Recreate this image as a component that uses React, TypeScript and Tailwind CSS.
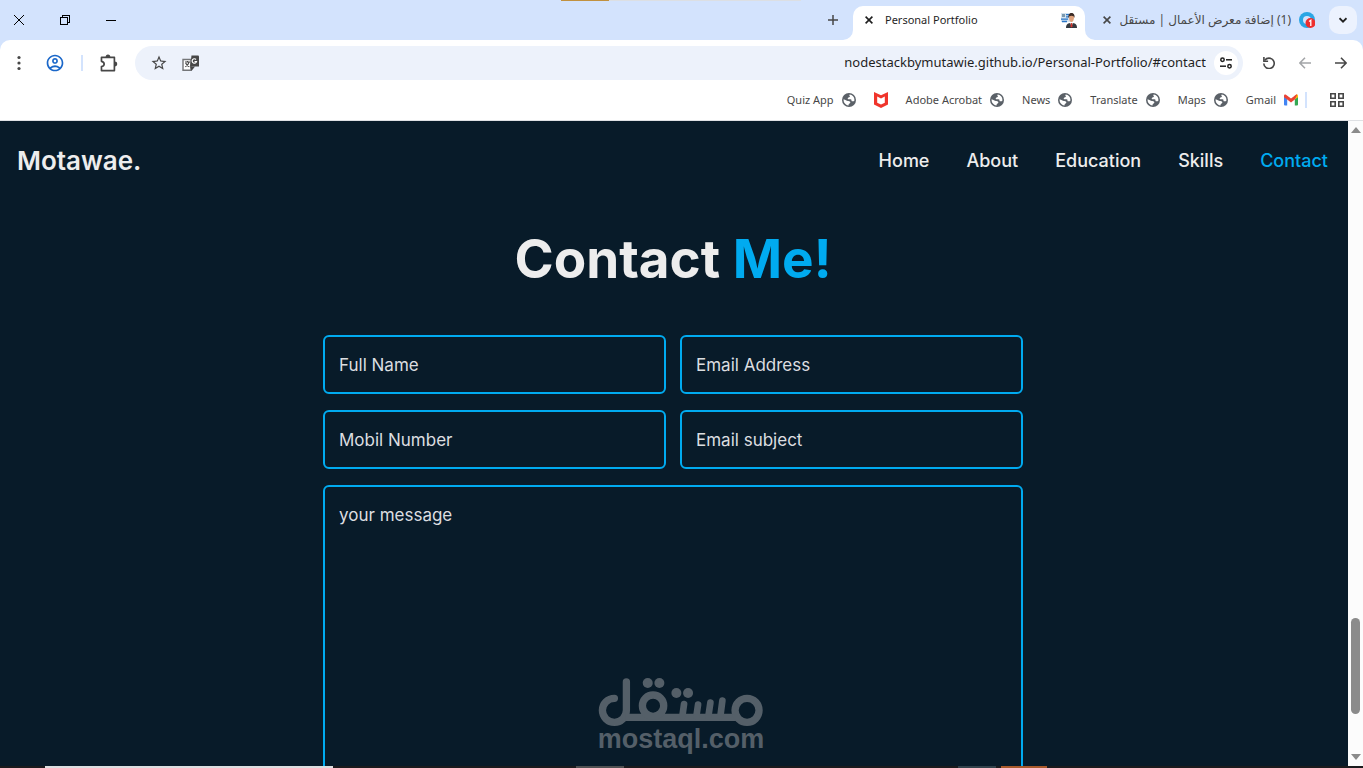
import type { ReactNode } from 'react'
import { MdOutlineAccountCircle, MdStarOutline } from 'react-icons/md'

interface Bookmark {
  label: string
  icon: 'globe' | 'shield' | 'gmail'
}

const BOOKMARKS: Bookmark[] = [
  { label: 'Quiz App',      icon: 'globe'  },
  { label: '',              icon: 'shield' },
  { label: 'Adobe Acrobat', icon: 'globe'  },
  { label: 'News',          icon: 'globe'  },
  { label: 'Translate',     icon: 'globe'  },
  { label: 'Maps',          icon: 'globe'  },
  { label: 'Gmail',         icon: 'gmail'  },
]

const NAV_LINKS = ['Home', 'About', 'Education', 'Skills', 'Contact']

const FIELDS = [
  { id: 'name',    type: 'text',  placeholder: 'Full Name'     },
  { id: 'email',   type: 'email', placeholder: 'Email Address' },
  { id: 'mobile',  type: 'tel',   placeholder: 'Mobil Number'  },
  { id: 'subject', type: 'text',  placeholder: 'Email subject' },
]

function CloseIcon() {
  return (
    <svg className="w-2 h-2" viewBox="0 0 8 8" fill="none" stroke="currentColor" strokeWidth={1.6}>
      <path d="M.6.6l6.8 6.8M7.4.6L.6 7.4" />
    </svg>
  )
}

function BookmarkIcon({ icon }: { icon: Bookmark['icon'] }) {
  if (icon === 'shield') {
    return (
      <svg className="w-3.5 h-4" viewBox="0 0 14 16">
        <path d="M0 0l7 3.2L14 0v12.6L7 16l-7-3.4z" fill="#f0342b" />
        <path d="M3.2 4.6L7 6.6l3.8-2v6.2L7 12.6l-3.8-1.8z" fill="#fff" />
      </svg>
    )
  }
  if (icon === 'gmail') {
    return (
      <svg className="w-3.5 h-3.5" viewBox="0 0 14 14">
        <path d="M0 3.5l3.2 2.3v6.700H1a1 1 0 0 1-1-1z" fill="#4285f4" />
        <path d="M14 3.500l-3.200 2.300v6.700H13a1 1 0 0 0 1-1z" fill="#34a853" />
        <path d="M10.800 2.600L12 1.800c.9-.6 2 0 2 1.100v1.300l-3.200 2.400z" fill="#fbbc04" />
        <path d="M0 4.200V2.900c0-1.100 1.100-1.700 2-1.100l5 3.700 5-3.700c.5-.4 1-.2 1.200 0L10.800 6.600 7 9.400 3.200 6.600z" fill="#ea4335" />
      </svg>
    )
  }
  return (
    <svg className="w-3.5 h-3.5" viewBox="0 0 14 14">
      <circle cx="7" cy="7" r="7" fill="#5b6168" />
      <path d="M7.600 1.500c-.3 1-.4 1.600.4 1.900-.2 1-1.500.8-2.100 1.500-.5.700 0 1.300 1 1.300h1.600c1 0 1.300 1 .9 1.700.8.500 1.700.4 2.900.1.700-3.200-1.200-6-4.700-6.500z" fill="#fff" />
      <path d="M1.600 6.200c-.3 3 1.700 5.800 4.900 6.200.2-.9.100-1.700 1.200-2 .700-.3.900-1.300.2-1.900C7 7.800 6 8.200 5 7.700 4 7.300 3 6.700 1.600 6.200z" fill="#fff" />
    </svg>
  )
}

function PortfolioFavicon() {
  return (
    <svg className="w-4 h-4 flex-shrink-0" viewBox="0 0 16 16">
      <path d="M0 1h10v9H0z" fill="#d3e3f1" />
      <path d="M1 2h3v3H1z" fill="#7b98ad" />
      <path d="M5 2h4v1.200H5zM5 4.200h3v1.200H5zM0 6.400h7v1.400H0zM1 8.800h5v1.400H1z" fill="#2a76c6" />
      <path d="M5 16c0-3.800 2-5 5.500-5s5.500 1.200 5.500 5z" fill="#34393f" />
      <path d="M9 10.500l1.500 4 1.500-4z" fill="#fff" />
      <path d="M8 5c0-2 1-2.500 2.500-2.500S13 3 13 5c0 3-1 5-2.500 5S8 8 8 5z" fill="#dfa27c" />
      <path d="M7.500 6C7 2.500 8.500 1 10.500 1S14 2.500 13.500 6c-.6-1.600-1-2.300-3-2.300S8 4.400 7.500 6z" fill="#3b2b25" />
      <path d="M10 11h1l.6 3.500-1.100 1-1.100-1z" fill="#d5352f" />
    </svg>
  )
}

function PuzzleIcon() {
  return (
    <svg className="w-[18px] h-[18px]" viewBox="0 0 16 16">
      <path
        d="M1.300 3h11.500v11.700H1.300v-3.600c3.200-.6 3.200-4 0-4.600z"
        fill="none" stroke="currentColor" strokeWidth="1.500" strokeLinejoin="round"
      />
      <path d="M5 3a2.100 2.500 0 0 1 4.200 0zM13 6.700a2.300 2.200 0 0 1 0 4.400z" fill="currentColor" />
    </svg>
  )
}

function TranslateIcon() {
  return (
    <svg className="w-[17px] h-[17px]" viewBox="0 0 17 17">
      <path d="M1 4.500h8v10.800H1z" fill="#fff" stroke="#747678" strokeWidth="1.400" />
      <path d="M9.500.5H16q1 0 1 1v10H8z" fill="#474747" />
      <path d="M8 11.500h5L9.500 16z" fill="#474747" />
      <path d="M3 7h5M5.500 6v1M7 7c-.4 2.300-1.700 3.800-3.700 4.800M3.600 8c1 2 2.200 3 3.700 3.800" fill="none" stroke="#474747" strokeWidth="1.200" />
      <path d="M14 4.500a2.200 2.200 0 1 0 .5 2h-2" fill="none" stroke="#fff" strokeWidth="1.200" />
    </svg>
  )
}

function TabStrip() {
  return (
    <div className="flex h-10 bg-[#d3e3fd] text-[#1f1f1f]">
      <button aria-label="Close window" className="w-[38px] flex items-center justify-center">
        <svg className="w-2.5 h-2.5" viewBox="0 0 10 10" fill="none" stroke="#000"><path d="M0 0l10 10M10 0L0 10" /></svg>
      </button>
      <button aria-label="Restore" className="w-[54px] flex items-center justify-center">
        <svg className="w-2.5 h-2.5" viewBox="0 0 10 10" fill="none" stroke="#000" shapeRendering="crispEdges">
          <path d="M.5 2.500h7v7h-7zM2.500 2.500v-2h7v7h-2" />
        </svg>
      </button>
      <button aria-label="Minimize" className="w-[38px] flex items-center justify-center">
        <span className="w-2.5 h-px bg-black" />
      </button>

      {/* edge of the window behind */}
      <div className="flex-1 flex justify-end">
        <div className="flex h-px w-60 mr-3">
          <span className="w-12 bg-[#c1913f]" />
          <span className="flex-1 bg-[#dcdfe3]" />
        </div>
      </div>

      <button aria-label="New tab" className="w-10 flex items-center justify-center">
        <svg className="w-2.5 h-2.5" viewBox="0 0 10 10" stroke="#474747" strokeWidth={1.5}><path d="M5 0v10M0 5h10" /></svg>
      </button>

      <div className="relative mt-1.5 w-[232px] flex items-center gap-3 rounded-t-[10px] bg-white pl-3 pr-2 pb-1.5">
        <svg className="absolute -left-2.5 bottom-0 w-2.5 h-2.5" viewBox="0 0 10 10"><path d="M10 0v10H0A10 10 0 0 0 10 0z" fill="#fff" /></svg>
        <svg className="absolute -right-2.5 bottom-0 w-2.5 h-2.5" viewBox="0 0 10 10"><path d="M0 0v10h10A10 10 0 0 1 0 0z" fill="#fff" /></svg>
        <button aria-label="Close tab"><CloseIcon /></button>
        <span className="flex-1 text-[11px] whitespace-nowrap">Personal Portfolio</span>
        <PortfolioFavicon />
      </div>

      <div className="mt-1.5 w-[236px] flex items-center gap-2 pl-[18px] pr-1.5 pb-1.5">
        <button aria-label="Close tab" className="text-[#474747]"><CloseIcon /></button>
        <span dir="rtl" className="flex-1 text-[12px] text-[#474747] whitespace-nowrap">(1) إضافة معرض الأعمال | مستقل</span>
        <svg className="w-4 h-4 flex-shrink-0" viewBox="0 0 16 16">
          <circle cx="8" cy="8" r="8" fill="#2aa6e4" />
          <circle cx="8" cy="8" r="4" fill="#d3e3fd" />
          <circle cx="11.500" cy="11" r="5" fill="#ee2f2f" />
          <path d="M10 9.500l1.800-1.200v5.600" fill="none" stroke="#fff" strokeWidth="1.300" />
        </svg>
      </div>

      <button aria-label="Search tabs" className="mt-1.5 ml-2 mr-1.5 w-7 h-7 rounded-[10px] bg-[#ecf2fe] flex items-center justify-center">
        <svg className="w-2 h-2" viewBox="0 0 8 8" fill="none" stroke="#1f1f1f" strokeWidth={1.800}><path d="M.5 2.200L4 5.700l3.500-3.500" /></svg>
      </button>
    </div>
  )
}

function ToolButton({ label, children }: { label: string; children: ReactNode }) {
  return (
    <button aria-label={label} className="w-9 flex-shrink-0 flex items-center justify-center text-[#474747]">
      {children}
    </button>
  )
}

function Toolbar() {
  return (
    <div className="bg-[#d3e3fd]">
      <div className="flex items-center h-[46px] rounded-t-[10px] bg-white px-px">
        <ToolButton label="Menu">
          <svg className="w-4 h-4" viewBox="0 0 16 16" fill="currentColor">
            <circle cx="8" cy="2.500" r="1.600" /><circle cx="8" cy="8" r="1.600" /><circle cx="8" cy="13.500" r="1.600" />
          </svg>
        </ToolButton>
        <ToolButton label="Profile"><MdOutlineAccountCircle className="w-5 h-5 text-[#1a67c9]" /></ToolButton>
        <span className="w-0.5 h-4 mx-2 bg-[#d3e3fd]" />
        <ToolButton label="Extensions"><PuzzleIcon /></ToolButton>

        <div className="flex-1 flex items-center h-[34px] ml-2 rounded-full bg-[#edf2fb] pl-[15px] pr-[5px]">
          <button aria-label="Bookmark this page" className="text-[#474747]"><MdStarOutline className="w-[18px] h-[18px]" /></button>
          <button aria-label="Translate" className="ml-3.5"><TranslateIcon /></button>
          <input
            aria-label="Address"
            defaultValue="nodestackbymutawie.github.io/Personal-Portfolio/#contact"
            className="flex-1 min-w-0 mr-2 bg-transparent text-right text-[13px] text-[#1f1f1f] focus:outline-none"
          />
          <button aria-label="Site information" className="w-6 h-6 rounded-full bg-white flex items-center justify-center">
            <svg className="w-3 h-3" viewBox="0 0 12 12" fill="none" stroke="#1f1f1f" strokeWidth={1.500}>
              <circle cx="2.500" cy="2.800" r="1.700" /><path d="M6 2.800h6" />
              <circle cx="9.500" cy="9.200" r="1.700" /><path d="M0 9.200h6" />
            </svg>
          </button>
        </div>

        <div className="flex ml-2 mr-[3px]">
          <ToolButton label="Reload">
            <svg className="w-3 h-3" viewBox="0 0 12 12" fill="none" stroke="currentColor" strokeWidth={1.600}>
              <path d="M1.800 3.300A5.200 5.200 0 1 1 .8 6.500" /><path d="M.9 0v4.200h4.200" />
            </svg>
          </ToolButton>
          <ToolButton label="Forward">
            <svg className="w-3 h-3 text-[#a3a5a8]" viewBox="0 0 12 12" fill="none" stroke="currentColor" strokeWidth={1.500}>
              <path d="M12 6H1M6 .7L.9 6 6 11.300" />
            </svg>
          </ToolButton>
          <ToolButton label="Back">
            <svg className="w-3 h-3" viewBox="0 0 12 12" fill="none" stroke="currentColor" strokeWidth={1.600}>
              <path d="M0 6h11M6 .7L11.100 6 6 11.300" />
            </svg>
          </ToolButton>
        </div>
      </div>
    </div>
  )
}

function BookmarksBar() {
  return (
    <div className="flex items-center justify-end h-[35px] bg-white border-b border-[#dfe1e4] pb-1.5 pr-[19px] text-[11px] text-[#474747]">
      <div className="flex items-center gap-[18px]">
        {BOOKMARKS.map(b => (
          <a key={b.icon + b.label} href="#contact" aria-label={b.label || 'McAfee'} className="flex items-center gap-2">
            {b.label && <span>{b.label}</span>}
            <BookmarkIcon icon={b.icon} />
          </a>
        ))}
      </div>
      <span className="w-0.5 h-4 ml-[7px] mr-[23px] bg-[#d3e3fd]" />
      <button aria-label="All bookmarks">
        <svg className="w-3.5 h-3.5" viewBox="0 0 14 14" fill="none" stroke="#474747" strokeWidth={1.600}>
          <path d="M.8.8h4.400v4.400H.8zM8.800.8h4.400v4.400H8.800zM.8 8.800h4.400v4.400H.8zM8.800 8.800h4.400v4.400H8.800z" />
        </svg>
      </button>
    </div>
  )
}

function Watermark() {
  return (
    <div className="absolute bottom-3.5 left-1/2 -translate-x-1/2 ml-[7px] flex flex-col items-center pointer-events-none text-[#545f68]">
      <svg className="w-[166px] h-12" viewBox="54 54 498 144" fill="none" stroke="currentColor" strokeWidth={22} strokeLinecap="round">
        <path d="M104 115A36 36 0 1 0 140 151V66" />
        <path d="M136 172H474" strokeLinecap="butt" />
        <circle cx="220" cy="137" r="32" />
        <circle cx="502" cy="151" r="36" />
        <path d="M308 168l5-36M350 168l5-34M386 168l6-40M422 168l6-46" strokeWidth={20} />
        <g fill="currentColor" stroke="none">
          <circle cx="204" cy="69" r="15" /><circle cx="239" cy="69" r="15" />
          <circle cx="290" cy="99" r="15" /><circle cx="325" cy="99" r="15" />
        </g>
      </svg>
      <span className="font-['Liberation_Sans',sans-serif] font-bold text-[27px] leading-[26px]">mostaql.com</span>
    </div>
  )
}

function ContactPage() {
  const box = 'w-full rounded-md border-2 border-[#00abf0] bg-transparent px-3.5 text-[17px] text-[#ededed] placeholder:text-[#dcdee0] focus:outline-none'

  return (
    <main className="relative flex-1 min-w-0 overflow-hidden bg-[#081b29] font-['Inter',sans-serif] text-[#ededed]">
      <header className="flex items-center justify-between h-[78px] pl-[17px] pr-5">
        <a href="#home" className="text-[26px] font-semibold">Motawae.</a>
        <nav className="flex gap-[37px] text-[18px] font-medium">
          {NAV_LINKS.map(link => (
            <a key={link} href={`#${link.toLowerCase()}`} className={link === 'Contact' ? 'text-[#00abf0]' : ''}>
              {link}
            </a>
          ))}
        </nav>
      </header>

      <section id="contact" className="pl-4 pr-[18px]">
        <h2 className="mt-[30px] mb-[46px] text-center text-[53px] leading-[60px] font-bold">
          Contact <span className="text-[#00abf0]">Me!</span>
        </h2>
        <form className="grid grid-cols-2 gap-x-3.5 gap-y-4 max-w-[700px] mx-auto">
          {FIELDS.map(f => (
            <input key={f.id} id={f.id} type={f.type} aria-label={f.placeholder} placeholder={f.placeholder} className={`${box} h-[59px]`} />
          ))}
          <textarea
            aria-label="your message"
            placeholder="your message"
            rows={12}
            className={`${box} col-span-2 py-4 resize-none`}
          />
        </form>
      </section>

      <Watermark />
    </main>
  )
}

function Scrollbar() {
  return (
    <div className="w-[15px] flex flex-col items-center bg-[#fcfcfc] py-1.5">
      <svg className="w-2.5 h-1.5" viewBox="0 0 10 6"><path d="M5 0l5 6H0z" fill="#8b8b8b" /></svg>
      <div className="flex-1" />
      <div className="w-[9px] h-24 mb-10 rounded-full bg-[#8b8b8b]" />
      <svg className="w-2.5 h-1.5" viewBox="0 0 10 6"><path d="M0 0h10L5 6z" fill="#8b8b8b" /></svg>
    </div>
  )
}

export default function App() {
  return (
    <div className="flex flex-col h-screen overflow-hidden font-['Noto_Sans','DejaVu_Sans',sans-serif]">
      <TabStrip />
      <Toolbar />
      <BookmarksBar />
      <div className="flex flex-1 min-h-0">
        <ContactPage />
        <Scrollbar />
      </div>
      {/* sliver of the desktop taskbar */}
      <div className="flex h-0.5 bg-[#1b1b1d]">
        <span className="w-72 ml-[45px] bg-[#dcdee0]" />
        <span className="w-12 ml-[243px] bg-[#505152]" />
        <span className="w-[38px] ml-[334px] bg-[#33424b]" />
        <span className="w-[46px] ml-[5px] bg-[#a85a2c]" />
      </div>
    </div>
  )
}
